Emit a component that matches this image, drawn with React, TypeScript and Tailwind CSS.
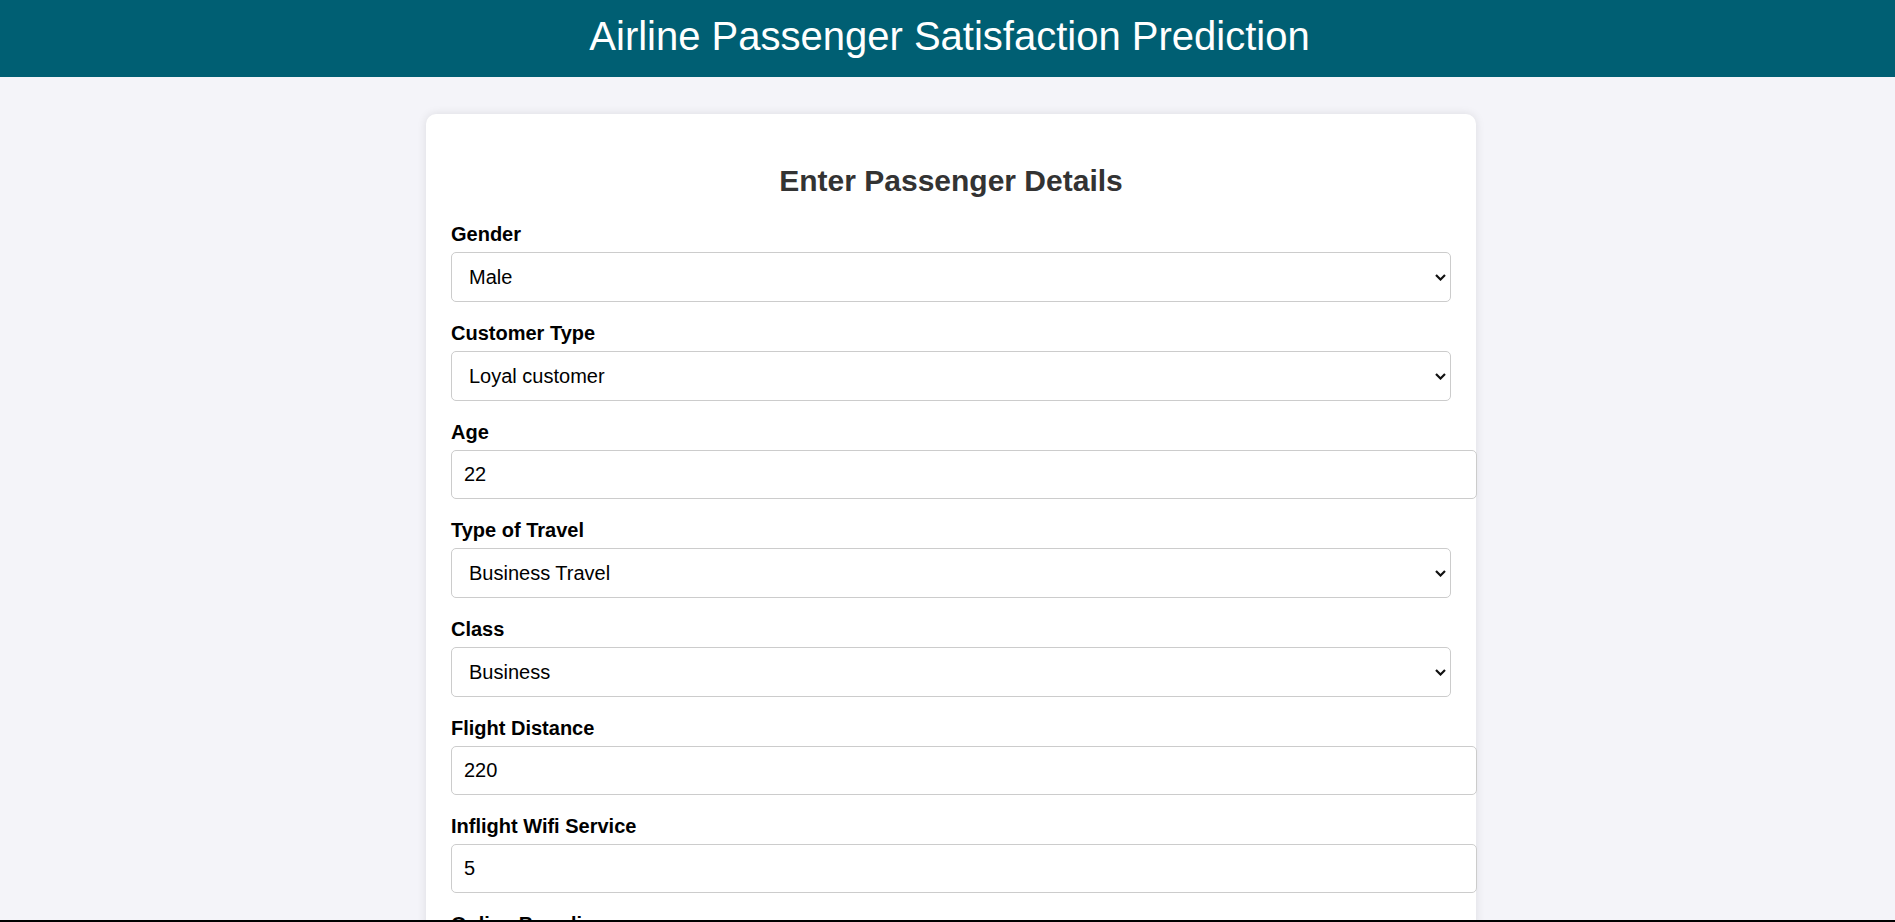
import { useState } from 'react';

interface Field {
  name: string;
  label: string;
  type: 'select' | 'number';
  options?: string[];
  value: string;
}

const fields: Field[] = [
  { name: 'gender', label: 'Gender', type: 'select', options: ['Male', 'Female'], value: 'Male' },
  { name: 'customer_type', label: 'Customer Type', type: 'select', options: ['Loyal customer', 'disloyal customer'], value: 'Loyal customer' },
  { name: 'age', label: 'Age', type: 'number', value: '22' },
  { name: 'type_of_travel', label: 'Type of Travel', type: 'select', options: ['Business Travel', 'Personal Travel'], value: 'Business Travel' },
  { name: 'class', label: 'Class', type: 'select', options: ['Business', 'Eco', 'Eco Plus'], value: 'Business' },
  { name: 'flight_distance', label: 'Flight Distance', type: 'number', value: '220' },
  { name: 'wifi', label: 'Inflight Wifi Service', type: 'number', value: '5' },
  { name: 'online_boarding', label: 'Online Boarding', type: 'number', value: '4' },
  { name: 'seat_comfort', label: 'Seat Comfort', type: 'number', value: '4' },
  { name: 'entertainment', label: 'Inflight Entertainment', type: 'number', value: '5' },
];

export default function App() {
  const [values, setValues] = useState<Record<string, string>>(
    Object.fromEntries(fields.map((f) => [f.name, f.value]))
  );

  const update = (name: string, value: string) => {
    setValues((prev) => ({ ...prev, [name]: value }));
  };

  return (
    <div className="h-[922px] overflow-hidden flex flex-col font-['Liberation_Sans',Arial,sans-serif]">
      <main className="flex-1 overflow-hidden bg-[#f4f4f9]">
        {/* Header */}
        <header className="h-[77px] bg-[#005f73] pt-[13px] pl-[4px] text-center">
          <h1 className="text-[40px] leading-[46px] text-white">Airline Passenger Satisfaction Prediction</h1>
        </header>

        {/* Form card */}
        <div className="ml-[426px] mt-[37px] w-[1050px] rounded-[10px] bg-white p-[25px] shadow-[0_0_10px_rgba(0,0,0,0.1)]">
          <h2 className="mt-[25px] mb-[24px] text-center text-[30px] font-bold leading-[34.5px] text-[#333]">
            Enter Passenger Details
          </h2>

          <form onSubmit={(e) => e.preventDefault()}>
            {fields.map((field) => (
              <div key={field.name} className="mb-[20px]">
                <label htmlFor={field.name} className="mb-[6px] block text-[20px] font-bold leading-[23px] text-black">
                  {field.label}
                </label>
                {field.type === 'select' ? (
                  <div className="relative w-[1000px]">
                    <select
                      id={field.name}
                      value={values[field.name]}
                      onChange={(e) => update(field.name, e.target.value)}
                      className="h-[50px] w-[1000px] appearance-none rounded-[5px] border border-[#cccccc] bg-white pl-[17px] text-[20px] text-black"
                    >
                      {field.options?.map((opt) => (
                        <option key={opt} value={opt}>{opt}</option>
                      ))}
                    </select>
                    {/* dropdown chevron */}
                    <svg
                      className="pointer-events-none absolute right-[5px] top-[22px]"
                      width="11"
                      height="7"
                      viewBox="0 0 11 7"
                      fill="none"
                    >
                      <polyline points="1,1 5.5,5.5 10,1" stroke="#111" strokeWidth="2.2" />
                    </svg>
                  </div>
                ) : (
                  <input
                    id={field.name}
                    type="number"
                    value={values[field.name]}
                    onChange={(e) => update(field.name, e.target.value)}
                    className="h-[49px] w-[1026px] rounded-[5px] border border-[#cccccc] bg-white pl-[12px] text-[20px] text-black"
                  />
                )}
              </div>
            ))}
          </form>
        </div>
      </main>
      <div className="h-[2px] bg-black" />
    </div>
  );
}
